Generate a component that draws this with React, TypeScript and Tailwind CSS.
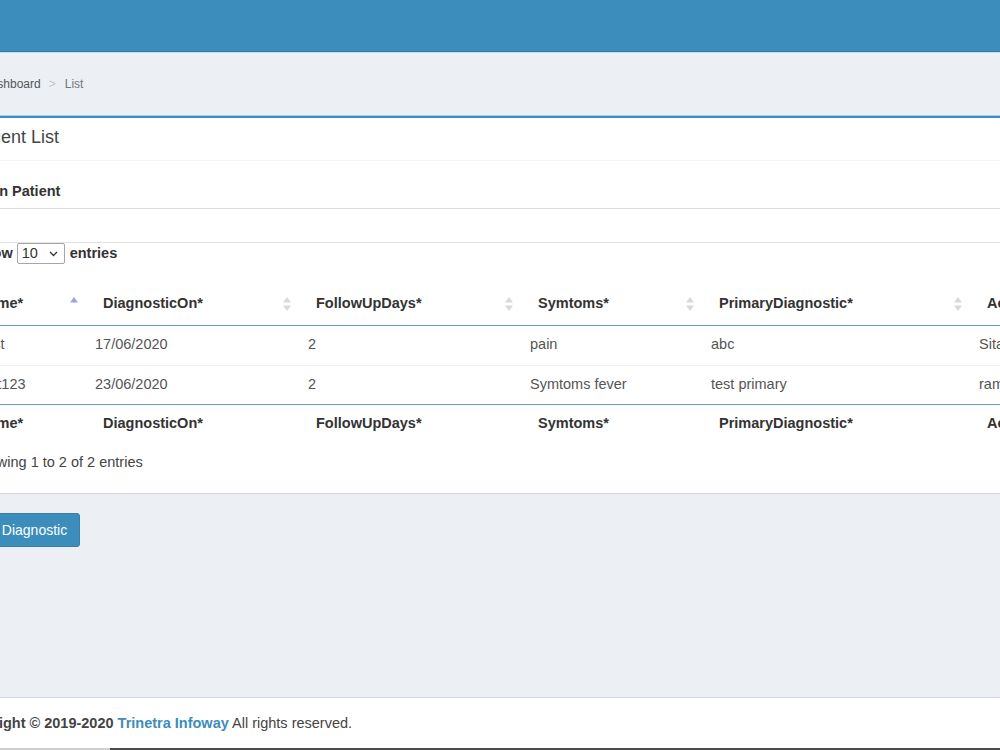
import React from 'react';

const rows = [
  { name: 'Test', on: '17/06/2020', days: '2', sym: 'pain', primary: 'abc', by: 'Sitaram' },
  { name: 'test123', on: '23/06/2020', days: '2', sym: 'Symtoms fever', primary: 'test primary', by: 'ramesh' },
];

function SortBoth() {
  return (
    <svg width="8" height="14" viewBox="0 0 8 14" className="shrink-0">
      <path d="M4 0 L8 5.5 L0 5.5 Z" fill="#d9d9d9" />
      <path d="M4 14 L8 8.5 L0 8.5 Z" fill="#d9d9d9" />
    </svg>
  );
}

function SortAsc() {
  return (
    <svg width="8" height="14" viewBox="0 0 8 14" className="shrink-0">
      <path d="M4 0 L8 5.5 L0 5.5 Z" fill="#9ea3dc" />
    </svg>
  );
}

const cols = [
  { label: 'Name*', w: 'w-[117px]', first: true },
  { label: 'DiagnosticOn*', w: 'w-[213px]' },
  { label: 'FollowUpDays*', w: 'w-[222px]' },
  { label: 'Symtoms*', w: 'w-[181px]' },
  { label: 'PrimaryDiagnostic*', w: 'w-[268px]' },
  { label: 'Action*', w: 'w-[200px]' },
];

function HeadRow({ icons }: { icons: boolean }) {
  return (
    <tr className={icons ? 'h-[41px] border-b border-[#5d9dc6]' : 'h-[40px]'}>
      {cols.map((c, i) => (
        <th key={c.label} className={`${c.w} p-0 text-left font-bold text-[#333]`}>
          <div className={`flex items-center justify-between pr-[9px] ${c.first ? 'pl-[8px]' : 'pl-[16px]'}`}>
            <span>{c.label}</span>
            {icons && i < 5 && (i === 0 ? <SortAsc /> : <SortBoth />)}
          </div>
        </th>
      ))}
    </tr>
  );
}

export default function App() {
  return (
    <div className="flex h-[750px] w-[1000px] flex-col overflow-hidden bg-[#ecf0f5] font-['Liberation_Sans',Arial,sans-serif] text-[14.5px] text-[#333]">
      <div className="h-[52px] shrink-0 border-b border-[#3579a2] bg-[#3c8dbc]" />

      <div className="-ml-[40px] flex w-[1040px] flex-1 flex-col">
        <div className="flex h-[63px] items-center border-t border-[#c4e0f0] pl-[22px] text-[12px] text-[#555]">
          <span>Dashboard</span>
          <span className="ml-[8px] text-[#c4c4c4]">&gt;</span>
          <span className="ml-[9px] text-[#777]">List</span>
        </div>

        <div className="border-t border-[#a9cfe6] bg-white shadow-[0_1px_1px_rgba(0,0,0,0.1)]">
          <div className="border-t-2 border-[#3c8dbc]">
            <div className="flex h-[43px] items-center border-b border-[#f4f4f4] pb-[4px] pl-[10px] text-[18px] text-[#444]">
              Patient List
            </div>
            <div className="h-[48px] border-b border-[#dcdcdc] pl-[15px] pt-[20px] font-bold leading-[20px] text-[#333]">
              Main Patient
            </div>
            <div className="h-[34px] border-b border-[#e2e2e2]" />

            <div className="pb-[21px]">
              <div className="flex h-[21px] items-center pl-[14px] font-bold text-[#333]">
                <span>Show</span>
                <div className="ml-[4px] flex h-[21px] w-[48px] items-center justify-between rounded-[2px] border border-[#a6a6a6] pl-[4px] pr-[6px] font-normal">
                  <span>10</span>
                  <svg width="9" height="6" viewBox="0 0 9 6">
                    <path d="M1 1 L4.5 4.5 L8 1" fill="none" stroke="#333" strokeWidth="1.3" />
                  </svg>
                </div>
                <span className="ml-[5px]">entries</span>
              </div>

              <table className="ml-[10px] mt-[20px] w-[1201px] table-fixed border-collapse">
                <thead>
                  <HeadRow icons />
                </thead>
                <tbody>
                  {rows.map((r, i) => (
                    <tr key={r.name} className={i === 0 ? 'h-[40px] border-b border-[#f0f0f0]' : 'h-[39px] border-b border-[#5d9dc6]'}>
                      {[r.name, r.on, r.days, r.sym, r.primary, r.by].map((v, j) => (
                        <td key={j} className="p-0 pl-[8px] text-[#555]">{v}</td>
                      ))}
                    </tr>
                  ))}
                </tbody>
                <tfoot>
                  <HeadRow icons={false} />
                </tfoot>
              </table>

              <div className="mt-[8px] pl-[11px] leading-[20px] text-[#444]">Showing 1 to 2 of 2 entries</div>
            </div>
          </div>
        </div>

        <div className="mt-[20px]">
          <button className="h-[34px] rounded-[3px] border border-[#367fa9] bg-[#3c8dbc] px-[12px] text-[14px] text-white">
            Add Diagnostic
          </button>
        </div>

        <div className="flex-1" />

        <div className="h-[51px] border-t border-[#d2d6de] bg-white pt-[15px] indent-[-3px] leading-[20px] text-[#444]">
          <span className="font-bold">Copyright © 2019-2020 </span>
          <span className="font-bold text-[#3c8dbc]">Trinetra Infoway</span>
          <span> All rights reserved.</span>
        </div>
      </div>

      <div className="flex h-[2px] shrink-0">
        <div className="w-[110px] bg-[#cfcfcf]" />
        <div className="flex-1 bg-[#4a4a4a]" />
      </div>
    </div>
  );
}
